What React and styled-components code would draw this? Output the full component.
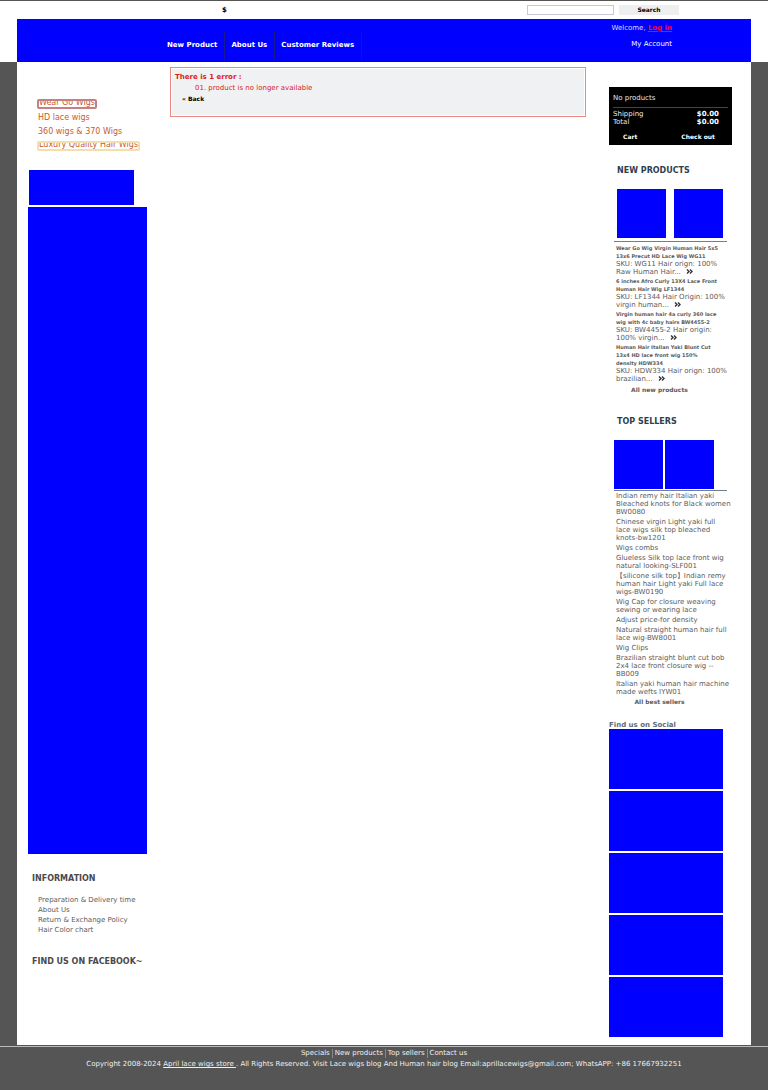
import React from 'react';
import styled, { createGlobalStyle } from 'styled-components';

const GlobalStyle = createGlobalStyle`
  * { box-sizing: border-box; }
  body {
    margin: 0;
    background: #555555;
    color: #5b5b5b;
    font: 7px/8px "DejaVu Sans", sans-serif;
  }
  a { color: inherit; text-decoration: none; }
  ul, ol, dl, dd, p, h2, h3 { margin: 0; padding: 0; list-style: none; }
`;

const Header = styled.header`
  background: #ffffff;
  border-top: 1px solid #555555;
  padding: 0 17px;
`;

const TopBar = styled.div`
  display: flex;
  align-items: center;
  height: 18px;
  padding: 0 72px 0 205px;
`;

const Currency = styled.span`
  color: #000000;
  font-weight: bold;
`;

const SearchForm = styled.form`
  display: flex;
  gap: 5px;
  margin-left: auto;
`;

const SearchInput = styled.input`
  width: 87px;
  height: 10px;
  padding: 0 2px;
  border: 1px solid #c5c8d6;
  background: #ffffff;
  font: 7px/8px "DejaVu Sans", sans-serif;
`;

const SearchButton = styled.button`
  width: 60px;
  height: 10px;
  padding: 0;
  border: 0;
  background: #efefef;
  color: #000000;
  font: bold 6px/8px "DejaVu Sans", sans-serif;
`;

const Banner = styled.div`
  display: flex;
  justify-content: space-between;
  height: 43px;
  padding: 0 79px 0 144px;
  background: #0000ff;
  color: #ffffff;
`;

const Nav = styled.nav`
  display: flex;
  padding: 12px 0 2px;
`;

const NavLink = styled.a`
  display: flex;
  align-items: center;
  padding: 0 7px 2px 6px;
  border-right: 1px solid #1a1a8c;
  font-weight: bold;
`;

const Account = styled.div`
  display: flex;
  flex-direction: column;
  gap: 8px;
  padding-top: 5px;
  text-align: right;
  color: #dcdcff;
`;

const LoginLink = styled.a`
  color: #ff0033;
  font-weight: bold;
  text-decoration: underline;
`;

const AccountLink = styled.a`
  color: #ffffff;
`;

const Content = styled.div`
  display: grid;
  grid-template-columns: 119px 1fr 123px;
  column-gap: 23px;
  margin: 0 17px;
  padding: 0 19px 8px 11px;
  background: #ffffff;
`;

const LeftColumn = styled.aside`
  padding-top: 37px;
`;

const CategoryList = styled.ul`
  display: flex;
  flex-direction: column;
  align-items: flex-start;
  gap: 4px;
  padding-left: 9px;
  margin-bottom: 19px;
  color: #c95a2b;
  font-size: 8px;
  line-height: 10px;
`;

const CategoryLink = styled.a`
  display: block;
  height: 10px;
  overflow: hidden;
  padding-left: ${(p) => (p.$frame ? '0' : '1px')};
  border: ${(p) => (p.$frame ? `2px solid ${p.$frame}` : '0')};
  border-radius: 2px;
  line-height: ${(p) => (p.$frame ? '4px' : '10px')};
`;

const Picture = styled.div`
  width: ${(p) => p.$width || '100%'};
  height: ${(p) => p.$height};
  background: #0000ff;
`;

const PictureStack = styled.div`
  display: grid;
  gap: 2px;
`;

const PromoPicture = styled(Picture)`
  margin-left: 1px;
`;

const Heading = styled.h2`
  color: ${(p) => p.$color || '#4a4a4a'};
  font-size: 8px;
  line-height: 10px;
`;

const InfoBlock = styled.section`
  padding: 20px 0 0 4px;
`;

const InfoList = styled.ul`
  padding: 11px 0 2px 6px;
  line-height: 10px;
`;

const ErrorBox = styled.section`
  height: 50px;
  margin-top: 5px;
  padding: 4px;
  border: 1px solid #ea8a84;
  background: #f0f1f3;
  box-shadow: inset 0 0 0 1px #ffffff;
  color: #dd1a1a;
`;

const ErrorTitle = styled.p`
  font-weight: bold;
  line-height: 10px;
`;

const ErrorList = styled.ol`
  padding: 2px 0 2px 20px;
`;

const BackLink = styled.a`
  display: inline-block;
  padding-left: 7px;
  color: #000000;
  font-size: 6px;
  font-weight: bold;
  line-height: 10px;
`;

const RightColumn = styled.aside`
  padding-top: 25px;
`;

const CartBox = styled.section`
  height: 58px;
  padding: 7px 4px 0;
  background: #000000;
  color: #e8e8e8;
`;

const CartRow = styled.div`
  display: flex;
  justify-content: space-between;
  padding-right: 9px;
`;

const CartStatus = styled.p`
  padding-bottom: 5px;
  margin-bottom: 2px;
  border-bottom: 1px solid #444444;
`;

const Price = styled.strong`
  color: #ffffff;
`;

const CartActions = styled.div`
  display: flex;
  justify-content: space-between;
  padding: 7px 13px 0 10px;
  color: #ffffff;
  font-size: 6px;
  font-weight: bold;
`;

const Block = styled.section`
  padding: 21px 5px 0;
`;

const BlockHeading = styled(Heading)`
  padding-left: 3px;
  margin-bottom: 13px;
`;

const Thumbs = styled.div`
  display: flex;
  gap: ${(p) => p.$gap};
  padding: 0 0 ${(p) => p.$after} ${(p) => p.$inset};
  border-bottom: 1px solid #6f7f8f;
`;

const ProductList = styled.dl`
  padding: 2px 0 0 2px;
  white-space: pre;
`;

const ProductName = styled.dt`
  font-size: 5px;
  font-weight: bold;
`;

const ProductText = styled.dd`
  margin-bottom: 1px;
`;

const More = styled.a`
  display: inline-block;
  margin-left: 5px;
  color: #333333;
`;

const Chevrons = styled.svg`
  display: block;
  width: 7px;
  height: 5px;
  fill: none;
  stroke: currentColor;
  stroke-width: 1.4;
`;

const SellerList = styled.ul`
  display: grid;
  gap: 2px;
  padding: 1px 0 0 2px;
  white-space: pre;
`;

const AllLink = styled.a`
  display: block;
  padding: 2px 22px 2px 0;
  font-size: 6px;
  font-weight: bold;
  text-align: center;
`;

const Social = styled.section`
  padding-top: 13px;
`;

const SocialTitle = styled.h3`
  color: #5d6b7a;
  font-size: 7px;
  line-height: 8px;
`;

const Footer = styled.footer`
  margin-top: 1px;
  border-top: 1px solid #bbbbbb;
  padding: 2px 0 20px;
  color: #f0f0f0;
  text-align: center;
`;

const FooterLinks = styled.ul`
  display: flex;
  justify-content: center;
  line-height: 9px;
`;

const FooterItem = styled.li`
  padding: 0 2px;
  & + & { border-left: 1px solid #888888; }
`;

const Copyright = styled.p`
  padding-top: 2px;
`;

const StoreLink = styled.a`
  text-decoration: underline;
`;

const categories = [
  { name: 'Wear Go Wigs', frame: '#c58087' },
  { name: 'HD lace wigs' },
  { name: '360 wigs & 370 Wigs' },
  { name: 'Luxury Quality Hair Wigs', frame: '#f2dfad' },
];

const information = ['Preparation & Delivery time', 'About Us', 'Return & Exchange Policy', 'Hair Color chart'];

const newProducts = [
  ['Wear Go Wig Virgin Human Hair 5x5\n13x6 Precut HD Lace Wig WG11', 'SKU: WG11 Hair orign: 100%\nRaw Human Hair...'],
  ['6 inches Afro Curly 13X4 Lace Front\nHuman Hair Wig LF1344', 'SKU: LF1344 Hair Origin: 100%\nvirgin human...'],
  ['Virgin human hair 4a curly 360 lace\nwig with 4c baby hairs BW4455-2', 'SKU: BW4455-2 Hair origin:\n100% virgin...'],
  ['Human Hair Italian Yaki Blunt Cut\n13x4 HD lace front wig 150%\ndensity HDW334', 'SKU: HDW334 Hair orign: 100%\nbrazilian...'],
];

const topSellers = [
  'Indian remy hair Italian yaki\nBleached knots for Black women\nBW0080',
  'Chinese virgin Light yaki full\nlace wigs silk top bleached\nknots-bw1201',
  'Wigs combs',
  'Glueless Silk top lace front wig\nnatural looking-SLF001',
  '【silicone silk top】Indian remy\nhuman hair Light yaki Full lace\nwigs-BW0190',
  'Wig Cap for closure weaving\nsewing or wearing lace',
  'Adjust price-for density',
  'Natural straight human hair full\nlace wig-BW8001',
  'Wig Clips',
  'Brazilian straight blunt cut bob\n2x4 lace front closure wig --\nBB009',
  'Italian yaki human hair machine\nmade wefts IYW01',
];

export default function App() {
  return (
    <>
      <GlobalStyle />
      <Header>
        <TopBar>
          <Currency>$</Currency>
          <SearchForm onSubmit={(e) => e.preventDefault()}>
            <SearchInput type="text" aria-label="Search" />
            <SearchButton type="submit">Search</SearchButton>
          </SearchForm>
        </TopBar>
        <Banner>
          <Nav>
            {['New Product', 'About Us', 'Customer Reviews'].map((n) => (
              <NavLink key={n} href="#">{n}</NavLink>
            ))}
          </Nav>
          <Account>
            <span>Welcome, <LoginLink href="#">Log in</LoginLink></span>
            <AccountLink href="#">My Account</AccountLink>
          </Account>
        </Banner>
      </Header>

      <Content>
        <LeftColumn>
          <CategoryList>
            {categories.map((c) => (
              <li key={c.name}>
                <CategoryLink href="#" $frame={c.frame}>{c.name}</CategoryLink>
              </li>
            ))}
          </CategoryList>
          <PictureStack>
            <PromoPicture $width="105px" $height="35px" />
            <Picture $height="647px" />
          </PictureStack>
          <InfoBlock>
            <Heading>INFORMATION</Heading>
            <InfoList>
              {information.map((n) => <li key={n}><a href="#">{n}</a></li>)}
            </InfoList>
          </InfoBlock>
          <InfoBlock>
            <Heading>FIND US ON FACEBOOK~</Heading>
          </InfoBlock>
        </LeftColumn>

        <main>
          <ErrorBox>
            <ErrorTitle>There is 1 error :</ErrorTitle>
            <ErrorList>
              <li>01. product is no longer available</li>
            </ErrorList>
            <BackLink href="#">« Back</BackLink>
          </ErrorBox>
        </main>

        <RightColumn>
          <CartBox>
            <CartStatus>No products</CartStatus>
            <CartRow><span>Shipping</span><Price>$0.00</Price></CartRow>
            <CartRow><span>Total</span><Price>$0.00</Price></CartRow>
            <CartActions>
              <a href="#">Cart</a>
              <a href="#">Check out</a>
            </CartActions>
          </CartBox>

          <Block>
            <BlockHeading $color="#2f3e4e">NEW PRODUCTS</BlockHeading>
            <Thumbs $gap="8px" $inset="3px" $after="3px">
              <Picture $width="49px" $height="49px" />
              <Picture $width="49px" $height="49px" />
            </Thumbs>
            <ProductList>
              {newProducts.map(([name, text]) => (
                <React.Fragment key={name}>
                  <ProductName><a href="#">{name}</a></ProductName>
                  <ProductText>
                    {text}
                    <More href="#" aria-label="More">
                      <Chevrons viewBox="0 0 7 5"><path d="M1 .5 3 2.5 1 4.5M4 .5 6 2.5 4 4.5" /></Chevrons>
                    </More>
                  </ProductText>
                </React.Fragment>
              ))}
            </ProductList>
            <AllLink href="#">All new products</AllLink>
          </Block>

          <Block>
            <BlockHeading $color="#2f3e4e">TOP SELLERS</BlockHeading>
            <Thumbs $gap="2px" $inset="0" $after="1px">
              <Picture $width="49px" $height="49px" />
              <Picture $width="49px" $height="49px" />
            </Thumbs>
            <SellerList>
              {topSellers.map((n) => <li key={n}><a href="#">{n}</a></li>)}
            </SellerList>
            <AllLink href="#">All best sellers</AllLink>
          </Block>

          <Social>
            <SocialTitle>Find us on Social</SocialTitle>
            <PictureStack>
              {[1, 2, 3, 4, 5].map((n) => <Picture key={n} $width="114px" $height="60px" />)}
            </PictureStack>
          </Social>
        </RightColumn>
      </Content>

      <Footer>
        <FooterLinks>
          {['Specials', 'New products', 'Top sellers', 'Contact us'].map((n) => (
            <FooterItem key={n}><a href="#">{n}</a></FooterItem>
          ))}
        </FooterLinks>
        <Copyright>
          Copyright 2008-2024 <StoreLink href="#">April lace wigs store </StoreLink>. All Rights Reserved. Visit Lace wigs blog And Human hair blog Email:aprillacewigs@gmail.com; WhatsAPP: +86 17667932251
        </Copyright>
      </Footer>
    </>
  );
}
